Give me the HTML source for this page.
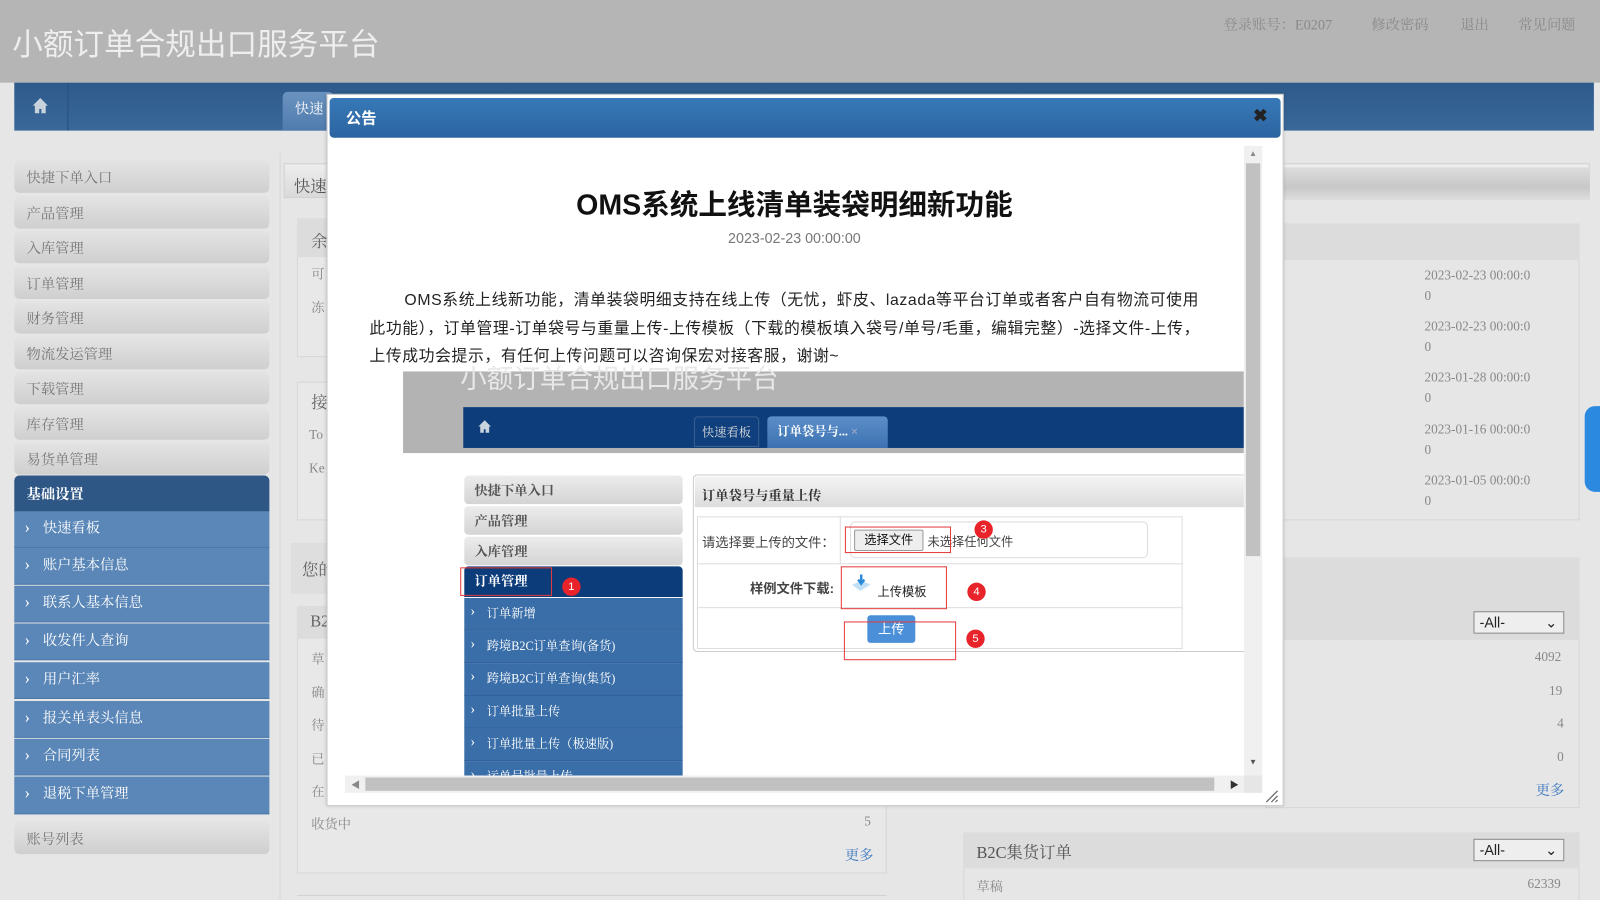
<!DOCTYPE html>
<html><head><meta charset="utf-8"><style>
*{margin:0;padding:0;box-sizing:border-box}
html,body{width:1600px;height:900px;overflow:hidden;background:#e6e6e6}
body{font-family:"Liberation Serif","Noto Serif CJK SC","Noto Sans CJK SC",serif}
#w{position:absolute;left:0;top:0;width:1568px;height:882px;transform:scale(1.020408);transform-origin:0 0;background:#e6e6e6;overflow:hidden}
.a{position:absolute}
.sans{font-family:"Liberation Sans","Noto Sans CJK SC",sans-serif}
.side{left:14px;width:250px;height:32px;border-radius:5px;background:linear-gradient(#e4e4e4,#cfcfcf);color:#777;font-size:14px;line-height:38px;padding-left:12px}
.sub{left:14px;width:250px;height:36px;background:#5b87b8;border-bottom:1px solid #4b78aa;color:#fff;font-size:14px;line-height:36px;padding-left:28px}
.sub:before{content:"›";position:absolute;left:10px;top:-1px;font-size:16px}
.g{color:#888;font-size:13px}
.es{width:214px;height:28px;border-radius:4px;background:linear-gradient(#ececec,#d4d4d4);color:#555;font-size:13px;line-height:30px;padding-left:10px;font-weight:bold}
.eb{left:455px;width:214px;height:32px;background:#3a6ea8;border-bottom:1px solid #2f609a;color:#fff;font-size:12px;line-height:30px;padding-left:22px}
.eb:before{content:"›";position:absolute;left:6px;top:-1px;font-size:14px}
.dot{width:18px;height:18px;border-radius:50%;background:#e8242a;color:#fff;font-size:11px;text-align:center;line-height:18px;font-family:"Liberation Sans",sans-serif}
.rb{border:1px solid #e53b3b}
</style></head><body><div id="w">
<div class="a" style="left:0;top:0;width:1568px;height:81px;background:#b5b5b5"></div>
<div class="a sans" style="left:12px;top:19px;font-size:30px;color:#eeeeee">小额订单合规出口服务平台</div>
<div class="a" style="left:1199px;top:14px;font-size:14px;color:#8a8a8a">登录账号：E0207</div>
<div class="a" style="left:1344px;top:14px;font-size:14px;color:#8a8a8a">修改密码</div>
<div class="a" style="left:1431px;top:14px;font-size:14px;color:#8a8a8a">退出</div>
<div class="a" style="left:1488px;top:14px;font-size:14px;color:#8a8a8a">常见问题</div>
<div class="a" style="left:14px;top:81px;width:1548px;height:47px;background:linear-gradient(#2d5a8a,#3a6898)"></div>
<div class="a" style="left:66px;top:81px;width:1px;height:47px;background:#27507c"></div>
<svg class="a" style="left:31px;top:95px" width="17" height="17" viewBox="0 0 16 16"><path d="M8 1L1 8h2v7h4v-4h2v4h4V8h2z" fill="#c8d3de"/></svg>
<div class="a" style="left:277px;top:90px;width:50px;height:38px;border-radius:5px 5px 0 0;background:linear-gradient(#6b93c0,#4f7bad);color:#fff;font-size:14px;line-height:36px;padding-left:12px">快速</div>
<div class="a side" style="top:157px">快捷下单入口</div>
<div class="a side" style="top:192px">产品管理</div>
<div class="a side" style="top:226px">入库管理</div>
<div class="a side" style="top:261px">订单管理</div>
<div class="a side" style="top:295px">财务管理</div>
<div class="a side" style="top:330px">物流发运管理</div>
<div class="a side" style="top:364px">下载管理</div>
<div class="a side" style="top:399px">库存管理</div>
<div class="a side" style="top:433px">易货单管理</div>
<div class="a" style="left:14px;top:466px;width:250px;height:36px;border-radius:5px 5px 0 0;background:#2e5785;color:#fff;font-size:14px;font-weight:bold;line-height:40px;padding-left:12px">基础设置</div>
<div class="a sub" style="top:501px">快速看板</div>
<div class="a sub" style="top:537px">账户基本信息</div>
<div class="a sub" style="top:574px">联系人基本信息</div>
<div class="a sub" style="top:611px">收发件人查询</div>
<div class="a sub" style="top:649px">用户汇率</div>
<div class="a sub" style="top:687px">报关单表头信息</div>
<div class="a sub" style="top:724px">合同列表</div>
<div class="a sub" style="top:761px;height:37px">退税下单管理</div>
<div class="a side" style="top:805px">账号列表</div>
<div class="a" style="left:274px;top:150px;width:1px;height:732px;background:#d8d8d8"></div>
<div class="a" style="left:278px;top:160px;width:1280px;height:34px;border:1px solid #d0d0d0;background:linear-gradient(#eee,#d9d9d9)"></div>
<div class="a" style="left:288px;top:170px;font-size:16px;color:#555">快速</div>
<div class="a" style="left:291px;top:214px;width:578px;height:136px;border:1px solid #d6d6d6;background:#e8e8e8"></div>
<div class="a" style="left:291px;top:214px;width:578px;height:38px;background:#dcdcdc"></div>
<div class="a" style="left:305px;top:224px;font-size:16px;color:#666">余</div>
<div class="a g" style="left:305px;top:258px">可</div><div class="a g" style="left:305px;top:291px">冻</div>
<div class="a" style="left:291px;top:374px;width:578px;height:136px;border:1px solid #d6d6d6;background:#e8e8e8"></div>
<div class="a" style="left:305px;top:382px;font-size:16px;color:#666">接</div>
<div class="a g" style="left:303px;top:418px">To</div><div class="a g" style="left:303px;top:451px">Ke</div>
<div class="a" style="left:285px;top:532px;width:590px;height:50px;background:#dedede"></div>
<div class="a" style="left:296px;top:546px;font-size:16px;color:#666">您的</div>
<div class="a" style="left:291px;top:594px;width:578px;height:262px;border:1px solid #d6d6d6;background:#e8e8e8"></div>
<div class="a" style="left:291px;top:594px;width:578px;height:32px;background:#dcdcdc"></div>
<div class="a" style="left:304px;top:601px;font-size:16px;color:#666">B2</div>
<div class="a g" style="left:305px;top:635px">草</div><div class="a g" style="left:305px;top:668px">确</div><div class="a g" style="left:305px;top:700px">待</div><div class="a g" style="left:305px;top:733px">已</div><div class="a g" style="left:305px;top:765px">在</div>
<div class="a g" style="left:305px;top:797px">收货中</div><div class="a g" style="left:847px;top:797px">5</div>
<div class="a" style="left:828px;top:828px;font-size:14px;color:#3a78c0">更多</div>
<div class="a" style="left:291px;top:877px;width:578px;height:5px;border-top:1px solid #d0d0d0"></div>
<div class="a" style="left:1240px;top:164px;width:318px;height:32px;background:linear-gradient(#ddd,#c8c8c8 60%,#ddd)"></div>
<div class="a" style="left:1240px;top:219px;width:308px;height:291px;border:1px solid #d6d6d6;background:#e6e6e6"></div>
<div class="a" style="left:1240px;top:219px;width:308px;height:36px;background:#dcdcdc"></div>
<div class="a g" style="left:1396px;top:260px;line-height:20px">2023-02-23 00:00:0<br>0</div>
<div class="a g" style="left:1396px;top:310px;line-height:20px">2023-02-23 00:00:0<br>0</div>
<div class="a g" style="left:1396px;top:360px;line-height:20px">2023-01-28 00:00:0<br>0</div>
<div class="a g" style="left:1396px;top:411px;line-height:20px">2023-01-16 00:00:0<br>0</div>
<div class="a g" style="left:1396px;top:461px;line-height:20px">2023-01-05 00:00:0<br>0</div>
<div class="a" style="left:1553px;top:398px;width:20px;height:84px;border-radius:10px 0 0 10px;background:#2b8ae0"></div>
<div class="a" style="left:1240px;top:546px;width:308px;height:48px;background:#dcdcdc"></div>
<div class="a" style="left:1240px;top:594px;width:308px;height:198px;border:1px solid #d6d6d6;background:#e6e6e6"></div>
<div class="a" style="left:1240px;top:594px;width:308px;height:33px;background:#dcdcdc"></div>
<div class="a sans" style="left:1444px;top:599px;width:89px;height:22px;border:1px solid #888;background:#eee;font-size:14px;line-height:20px;padding-left:5px;color:#222">-All-<span style="position:absolute;right:6px;top:0">⌄</span></div>
<div class="a g" style="left:1504px;top:636px">4092</div><div class="a g" style="left:1518px;top:669px">19</div><div class="a g" style="left:1526px;top:701px">4</div><div class="a g" style="left:1526px;top:734px">0</div>
<div class="a" style="left:1505px;top:764px;font-size:14px;color:#3a78c0">更多</div>
<div class="a" style="left:944px;top:816px;width:604px;height:70px;border:1px solid #d6d6d6;background:#e6e6e6"></div>
<div class="a" style="left:944px;top:816px;width:604px;height:35px;background:#dcdcdc"></div>
<div class="a" style="left:957px;top:823px;font-size:16px;color:#555">B2C集货订单</div>
<div class="a sans" style="left:1444px;top:822px;width:89px;height:22px;border:1px solid #888;background:#eee;font-size:14px;line-height:20px;padding-left:5px;color:#222">-All-<span style="position:absolute;right:6px;top:0">⌄</span></div>
<div class="a g" style="left:957px;top:858px">草稿</div><div class="a g" style="left:1497px;top:858px">62339</div>
<div class="a" style="left:320px;top:92px;width:938px;height:698px;background:#fff;border:1px solid #c8c8c8;box-shadow:0 0 4px rgba(0,0,0,.2)"></div>
<div class="a" style="left:323px;top:96px;width:932px;height:39px;border-radius:4px;background:linear-gradient(#3779b8,#2c64a0);"></div>
<div class="a sans" style="left:339px;top:105px;color:#fff;font-size:15px;font-weight:bold">公告</div>
<div class="a sans" style="left:1228px;top:104px;color:#222;font-size:17px;font-weight:bold">✖</div>
<div class="a" style="left:338px;top:143px;width:881px;height:617px;overflow:hidden;background:#fff">
 <div class="a sans" style="left:0;top:36px;width:881px;text-align:center;font-size:28px;font-weight:bold;color:#111">OMS系统上线清单装袋明细新功能</div>
 <div class="a sans" style="left:0;top:82px;width:881px;text-align:center;font-size:14px;color:#777">2023-02-23 00:00:00</div>
 <div class="a sans" style="left:24px;top:138px;width:860px;font-size:15.5px;color:#222;line-height:27.5px;white-space:nowrap;letter-spacing:0.6px">&nbsp;&nbsp;&nbsp;&nbsp;&nbsp;&nbsp;&nbsp;OMS系统上线新功能，清单装袋明细支持在线上传（无忧，虾皮、lazada等平台订单或者客户自有物流可使用<br>此功能），订单管理-订单袋号与重量上传-上传模板（下载的模板填入袋号/单号/毛重，编辑完整）-选择文件-上传，<br>上传成功会提示，有任何上传问题可以咨询保宏对接客服，谢谢~</div>
 <div class="a" style="left:57px;top:221px;width:824px;height:80px;background:#b3b3b3"></div>
 <div class="a sans" style="left:113px;top:208px;font-size:26px;color:#e8e8e8">小额订单合规出口服务平台</div>
 <div class="a" style="left:116px;top:256px;width:765px;height:40px;background:#0d3d7a"></div>
 <svg class="a" style="left:130px;top:268px" width="14" height="14" viewBox="0 0 16 16"><path d="M8 1L1 8h2v7h4v-4h2v4h4V8h2z" fill="#c8d3de"/></svg>
 <div class="a" style="left:342px;top:265px;width:64px;height:30px;border:1px solid #3a5f8e;border-radius:4px 4px 0 0;background:#0f3f7c;color:#ddd;font-size:12px;line-height:30px;text-align:center">快速看板</div>
 <div class="a" style="left:414px;top:265px;width:118px;height:31px;border-radius:4px 4px 0 0;background:linear-gradient(#5c8fc9,#3c72b2);color:#fff;font-size:12px;font-weight:bold;line-height:30px;padding-left:10px">订单袋号与... <span style="color:#aac">×</span></div>
 <div class="a es" style="left:117px;top:323px">快捷下单入口</div>
 <div class="a es" style="left:117px;top:353px">产品管理</div>
 <div class="a es" style="left:117px;top:383px">入库管理</div>
 <div class="a" style="left:117px;top:412px;width:214px;height:30px;border-radius:4px 4px 0 0;background:#0c3c7a;color:#fff;font-size:13px;font-weight:bold;line-height:30px;padding-left:10px">订单管理</div>
 <div class="a rb" style="left:113px;top:413px;width:90px;height:28px"></div>
 <div class="a dot" style="left:213px;top:423px">1</div>
 <div style="position:absolute;left:-338px;top:-143px">
  <div class="eb" style="top:586px;position:absolute">订单新增</div>
  <div class="eb" style="top:618px;position:absolute">跨境B2C订单查询(备货)</div>
  <div class="eb" style="top:650px;position:absolute">跨境B2C订单查询(集货)</div>
  <div class="eb" style="top:682px;position:absolute">订单批量上传</div>
  <div class="eb" style="top:714px;position:absolute">订单批量上传（极速版)</div>
  <div class="eb" style="top:746px;position:absolute">运单号批量上传</div>
 </div>
 <div class="a" style="left:341px;top:322px;width:545px;height:174px;border:1px solid #ccc;border-radius:4px;background:#fff"></div>
 <div class="a" style="left:343px;top:324px;width:540px;height:30px;background:linear-gradient(#f4f4f4,#dcdcdc)"></div>
 <div class="a" style="left:350px;top:332px;font-size:13px;font-weight:bold;color:#333">订单袋号与重量上传</div>
 <div class="a" style="left:345px;top:363px;width:476px;height:130px;border:1px solid #ddd"></div>
 <div class="a" style="left:345px;top:409px;width:476px;height:1px;background:#ddd"></div>
 <div class="a" style="left:345px;top:452px;width:476px;height:1px;background:#ddd"></div>
 <div class="a" style="left:485px;top:363px;width:1px;height:46px;background:#ddd"></div>
 <div class="a sans" style="left:350px;top:378px;font-size:13px;color:#444">请选择要上传的文件：</div>
 <div class="a" style="left:495px;top:368px;width:292px;height:36px;border:1px solid #ddd;border-radius:5px"></div>
 <div class="a sans" style="left:499px;top:376px;width:68px;height:21px;border:1px solid #999;border-radius:2px;background:#eee;font-size:12px;line-height:19px;text-align:center;color:#111">选择文件</div>
 <div class="a sans" style="left:571px;top:379px;font-size:12px;color:#444">未选择任何文件</div>
 <div class="a rb" style="left:490px;top:373px;width:104px;height:26px"></div>
 <div class="a dot" style="left:617px;top:367px">3</div>
 <div class="a sans" style="left:397px;top:423px;font-size:13px;color:#444;font-weight:bold">样例文件下载:</div>
 <svg class="a" style="left:495px;top:418px" width="22" height="20" viewBox="0 0 22 20"><path d="M2 12l8 6 10-6-8-4z" fill="#bfe0f5"/><path d="M11 2v8M8 7l3 4 3-4" stroke="#2a8ad8" stroke-width="2.4" fill="none"/></svg>
 <div class="a sans" style="left:522px;top:428px;font-size:12px;color:#222">上传模板</div>
 <div class="a rb" style="left:486px;top:412px;width:104px;height:42px"></div>
 <div class="a dot" style="left:610px;top:428px">4</div>
 <div class="a sans" style="left:512px;top:460px;width:47px;height:27px;border-radius:3px;background:#4a8fd8;color:#fff;font-size:13px;line-height:27px;text-align:center">上传</div>
 <div class="a rb" style="left:489px;top:466px;width:110px;height:38px"></div>
 <div class="a dot" style="left:609px;top:474px">5</div>
</div>
<div class="a" style="left:1219px;top:143px;width:18px;height:617px;background:#f0f0f0"></div>
<div class="a" style="left:1221px;top:160px;width:14px;height:385px;background:#c1c1c1"></div>
<div class="a" style="left:1224px;top:146px;font-size:8px;color:#888">▲</div>
<div class="a" style="left:1224px;top:742px;font-size:8px;color:#555">▼</div>
<div class="a" style="left:338px;top:760px;width:881px;height:17px;background:#f0f0f0"></div>
<div class="a" style="left:358px;top:762px;width:832px;height:13px;background:#c1c1c1"></div>
<div class="a" style="left:344px;top:762px;font-size:9px;color:#888">◀</div>
<div class="a" style="left:1205px;top:762px;font-size:9px;color:#333">▶</div>
<div class="a" style="left:1219px;top:760px;width:18px;height:17px;background:#e6e6e6"></div>
<svg class="a" style="left:1238px;top:772px" width="16" height="16"><path d="M3 14L14 3M8 14L14 8M12 14l2-2" stroke="#666" stroke-width="1.2"/></svg>
</div></body></html>
